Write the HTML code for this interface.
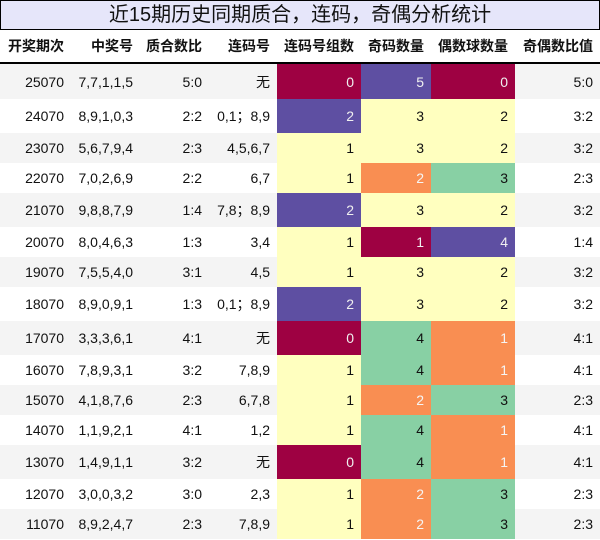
<!DOCTYPE html><html><head><meta charset="utf-8"><style>
body{margin:0;width:600px;height:540px;background:#fff;font-family:"Liberation Sans","Noto Sans CJK SC",sans-serif;position:relative;overflow:hidden}
.t{position:absolute;left:0;top:0;width:598px;height:28px;border:1px solid #000;background:#e6e6fa;text-align:center;font-size:20px;line-height:29px;color:#111}
.h{position:absolute;top:30px;left:0;width:600px;height:32px;border-bottom:2px solid #000}
.c{position:absolute;box-sizing:border-box;text-align:right;padding-right:7px;font-size:14px;color:#111;display:flex;align-items:center;justify-content:flex-end}
.h .c{font-weight:bold;height:32px}
.r{position:absolute;left:0;width:600px}
.g{background:#f4f4f4}
.A{background:#9e0142;color:#f0f0f0}.P{background:#5e4fa2;color:#f0f0f0}.Y{background:#ffffbf}.O{background:#f98e52;color:#f5f5f5}.G{background:#88d0a4}
</style></head><body>
<div class="t">近15期历史同期质合，连码，奇偶分析统计</div>
<div class="h">
<div class="c" style="left:0;width:71px">开奖期次</div>
<div class="c" style="left:71px;width:69px">中奖号</div>
<div class="c" style="left:140px;width:69px">质合数比</div>
<div class="c" style="left:209px;width:68px">连码号</div>
<div class="c" style="left:277px;width:84px">连码号组数</div>
<div class="c" style="left:361px;width:70px">奇码数量</div>
<div class="c" style="left:431px;width:84px">偶数球数量</div>
<div class="c" style="left:515px;width:85px">奇偶数比值</div>
</div>
<div id="rows"></div>
<script>
var d=[
[64,35,"25070","7,7,1,1,5","5:0","无","0A","5P","0A","5:0"],
[99,34,"24070","8,9,1,0,3","2:2","0,1；8,9","2P","3Y","2Y","3:2"],
[133,30,"23070","5,6,7,9,4","2:3","4,5,6,7","1Y","3Y","2Y","3:2"],
[163,30,"22070","7,0,2,6,9","2:2","6,7","1Y","2O","3G","2:3"],
[193,34,"21070","9,8,8,7,9","1:4","7,8；8,9","2P","3Y","2Y","3:2"],
[227,30,"20070","8,0,4,6,3","1:3","3,4","1Y","1A","4P","1:4"],
[257,30,"19070","7,5,5,4,0","3:1","4,5","1Y","3Y","2Y","3:2"],
[287,34,"18070","8,9,0,9,1","1:3","0,1；8,9","2P","3Y","2Y","3:2"],
[321,34,"17070","3,3,3,6,1","4:1","无","0A","4G","1O","4:1"],
[355,30,"16070","7,8,9,3,1","3:2","7,8,9","1Y","4G","1O","4:1"],
[385,30,"15070","4,1,8,7,6","2:3","6,7,8","1Y","2O","3G","2:3"],
[415,30,"14070","1,1,9,2,1","4:1","1,2","1Y","4G","1O","4:1"],
[445,34,"13070","1,4,9,1,1","3:2","无","0A","4G","1O","4:1"],
[479,30,"12070","3,0,0,3,2","3:0","2,3","1Y","2O","3G","2:3"],
[509,30,"11070","8,9,2,4,7","2:3","7,8,9","1Y","2O","3G","2:3"]];
var L=[0,71,140,209,277,361,431,515,600],h="";
d.forEach(function(r,i){h+='<div class="r'+(i%2?'':' g')+'" style="top:'+r[0]+'px;height:'+r[1]+'px">';
for(var k=0;k<8;k++){var v=r[k+2],cl="";if(k>=4&&k<=6){cl=v.slice(1);v=v[0];}
h+='<div class="c '+cl+'" style="left:'+L[k]+'px;width:'+(L[k+1]-L[k])+'px;height:'+r[1]+'px">'+v+'</div>';}
h+='</div>';});
document.getElementById("rows").innerHTML=h;
</script>
</body></html>
